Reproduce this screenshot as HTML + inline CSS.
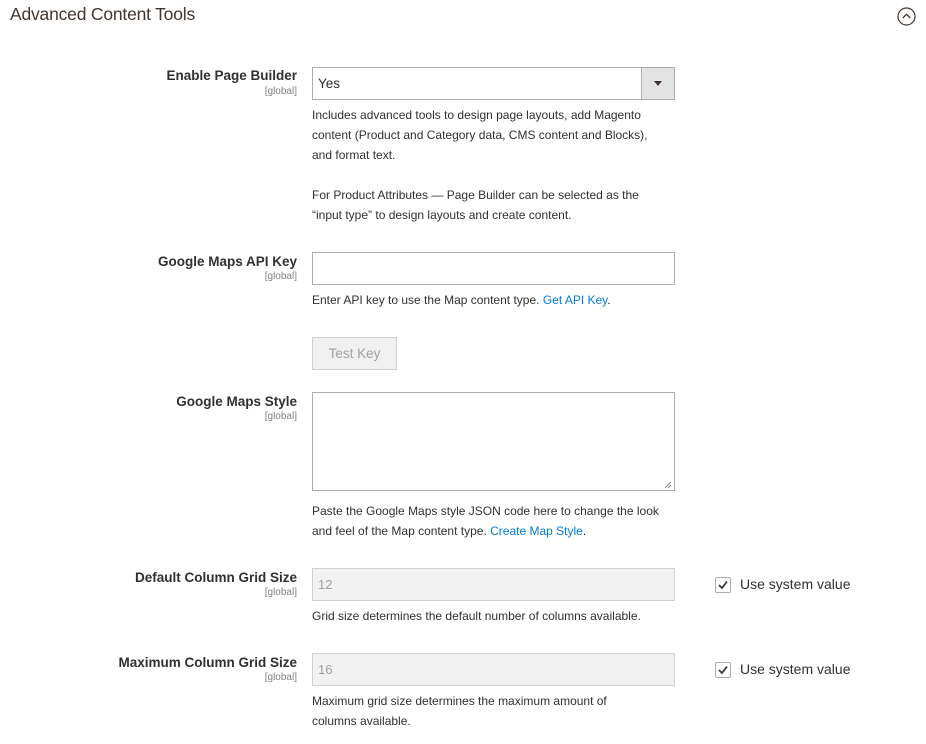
<!DOCTYPE html>
<html><head><style>
body{margin:0;width:926px;height:744px;background:#fff;font-family:"Liberation Sans",sans-serif;color:#303030;position:relative;overflow:hidden}
.a{position:absolute}
.t{left:10px;top:4px;font-size:17.5px;color:#41362f;letter-spacing:-0.2px}
.lab{right:629px;text-align:right;font-size:13.5px;font-weight:bold;color:#303030;white-space:nowrap}
.g{right:629px;font-size:10px;color:#808080;text-align:right}
.in{left:312px;width:361px;border:1px solid #adadad;background:#fff;height:31px}
.dis{background:#f2f2f2;border-color:#d0d0d0;color:#a0a0a0;font-size:13px;line-height:31px;padding-left:5px;width:356px;box-sizing:content-box}
.h{left:312px;font-size:12px;line-height:20px;color:#303030;white-space:nowrap}
.lk{color:#007bdb}
.cb{left:715px;width:14px;height:14px;border:1px solid #adadad;border-radius:2px;background:#fff}
.cbl{left:740px;font-size:14px;color:#303030}
</style></head><body>
<div class="a t">Advanced Content Tools</div>
<svg class="a" style="left:897px;top:7px" width="19" height="19" viewBox="0 0 19 19"><circle cx="9.5" cy="9.5" r="8.5" fill="none" stroke="#41362f" stroke-width="1.2"/><path d="M5.8 11 L9.5 7.3 L13.2 11" fill="none" stroke="#41362f" stroke-width="1.3"/></svg>

<div class="a lab" style="top:68px">Enable Page Builder</div>
<div class="a g" style="top:86px">[global]</div>
<div class="a in" style="top:67px;height:31px"><span class="a" style="left:5px;top:8px;font-size:13.5px;color:#303030">Yes</span><div class="a" style="right:0;top:0;width:32px;height:31px;background:#e3e3e3;border-left:1px solid #adadad"></div><div class="a" style="right:12px;top:13px;width:0;height:0;border-left:4px solid transparent;border-right:4px solid transparent;border-top:5px solid #41362f"></div></div>
<div class="a h" style="top:105px">Includes advanced tools to design page layouts, add Magento<br>content (Product and Category data, CMS content and Blocks),<br>and format text.<br><br>For Product Attributes — Page Builder can be selected as the<br>“input type” to design layouts and create content.</div>

<div class="a lab" style="top:254px">Google Maps API Key</div>
<div class="a g" style="top:271px">[global]</div>
<div class="a in" style="top:252px"></div>
<div class="a h" style="top:290px">Enter API key to use the Map content type. <span class="lk">Get API Key</span>.</div>
<div class="a" style="left:312px;top:337px;width:83px;height:31px;border:1px solid #d0d0d0;background:#f0f0f0;color:#a0a0a0;font-size:13.5px;text-align:center;line-height:31px">Test Key</div>

<div class="a lab" style="top:394px">Google Maps Style</div>
<div class="a g" style="top:411px">[global]</div>
<div class="a in" style="top:392px;height:97px"></div>
<svg class="a" style="left:664px;top:481px" width="8" height="8"><path d="M7 1L1 7M7 4L4 7" stroke="#888" stroke-width="1"/></svg>
<div class="a h" style="top:501px">Paste the Google Maps style JSON code here to change the look<br>and feel of the Map content type. <span class="lk">Create Map Style</span>.</div>

<div class="a lab" style="top:570px">Default Column Grid Size</div>
<div class="a g" style="top:587px">[global]</div>
<div class="a in dis" style="top:568px">12</div>
<div class="a cb" style="top:577px"><svg width="14" height="14"><path d="M3 7L6 10L11 3.5" fill="none" stroke="#41362f" stroke-width="1.8"/></svg></div>
<div class="a cbl" style="top:576px">Use system value</div>
<div class="a h" style="top:606px">Grid size determines the default number of columns available.</div>

<div class="a lab" style="top:655px">Maximum Column Grid Size</div>
<div class="a g" style="top:672px">[global]</div>
<div class="a in dis" style="top:653px">16</div>
<div class="a cb" style="top:662px"><svg width="14" height="14"><path d="M3 7L6 10L11 3.5" fill="none" stroke="#41362f" stroke-width="1.8"/></svg></div>
<div class="a cbl" style="top:661px">Use system value</div>
<div class="a h" style="top:691px">Maximum grid size determines the maximum amount of<br>columns available.</div>
</body></html>
